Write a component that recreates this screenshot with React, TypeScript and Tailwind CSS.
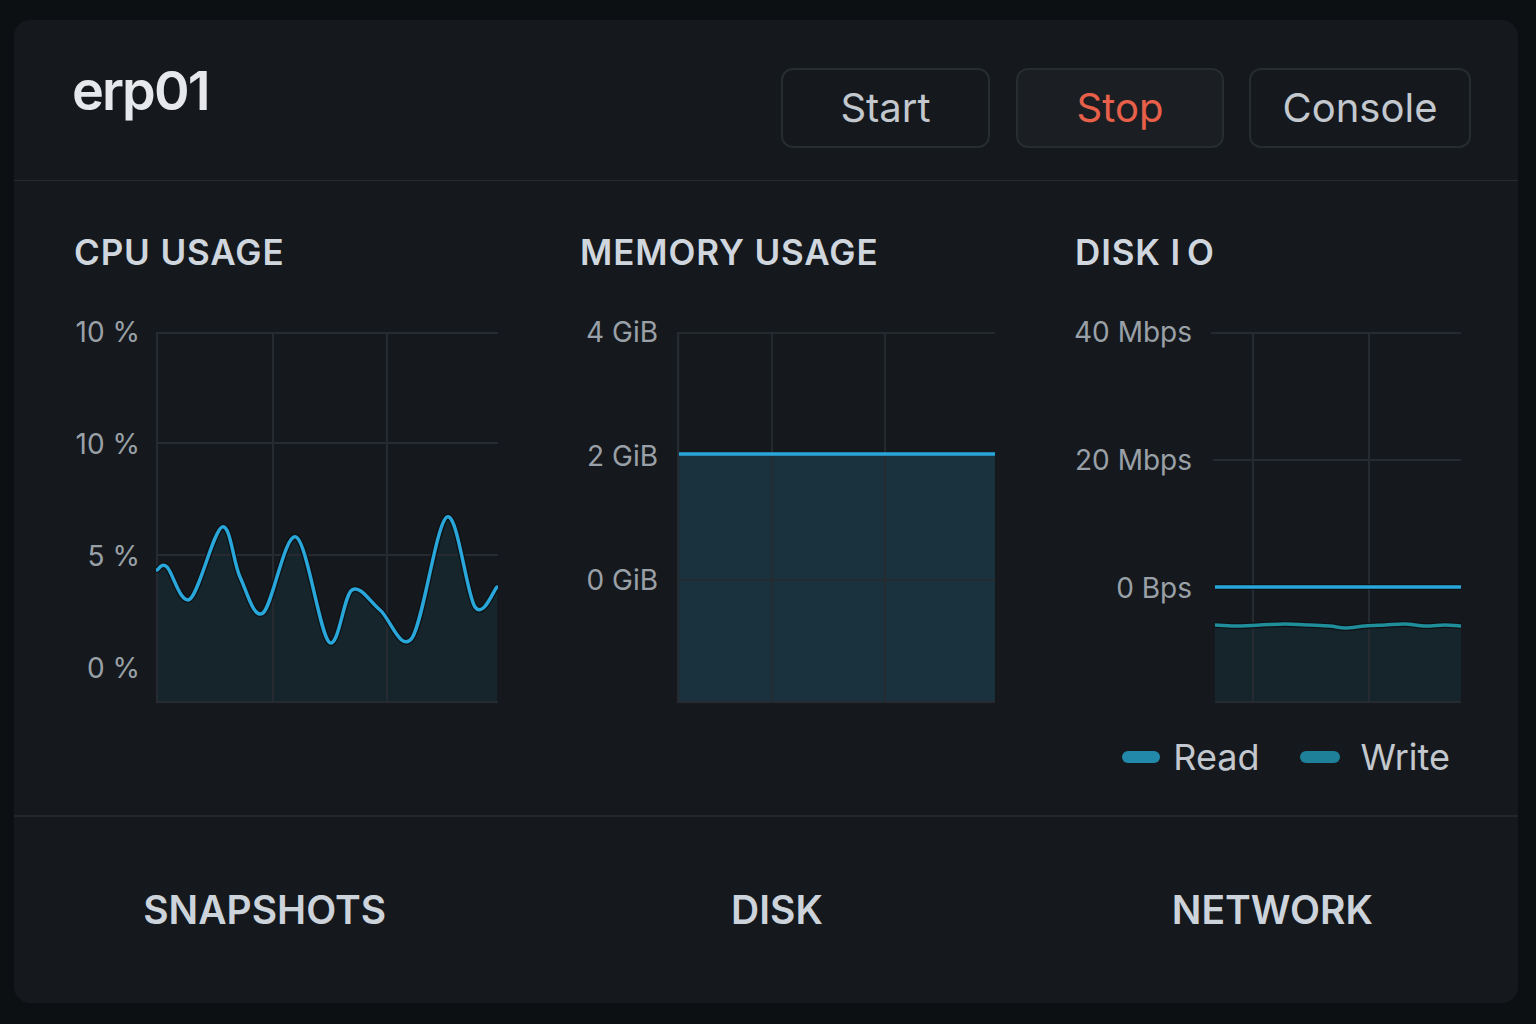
import React from "react";

type Pt = [number, number];

function smoothPath(points: Pt[]) {
  let d = `M ${points[0][0]} ${points[0][1]}`;
  for (let i = 0; i < points.length - 1; i++) {
    const p0 = points[i - 1] ?? points[i];
    const p1 = points[i];
    const p2 = points[i + 1];
    const p3 = points[i + 2] ?? p2;
    const c1x = p1[0] + (p2[0] - p0[0]) / 6;
    const c1y = p1[1] + (p2[1] - p0[1]) / 6;
    const c2x = p2[0] - (p3[0] - p1[0]) / 6;
    const c2y = p2[1] - (p3[1] - p1[1]) / 6;
    d += ` C ${c1x} ${c1y}, ${c2x} ${c2y}, ${p2[0]} ${p2[1]}`;
  }
  return d;
}

const GRID = "#262b31";
const LINE = "#2aa7da";
const H = 371;

const cpuPoints: Pt[] = [
  [1, 238], [11, 235], [34, 267], [66, 195], [84, 245], [107, 281], [140, 205],
  [173, 310], [196, 258], [224, 278], [256, 306], [291, 185], [319, 275], [341, 255],
];

const writePoints: Pt[] = [
  [0, 293], [20, 294], [45, 293], [70, 292], [95, 293], [115, 294], [130, 296],
  [150, 294], [170, 293], [190, 292], [210, 294], [230, 293], [246, 294],
];

function CpuChart() {
  const line = smoothPath(cpuPoints);
  const W = 342;
  return (
    <svg width={W} height={H} className="block">
      <path d={`${line} L ${W - 1} ${H} L 1 ${H} Z`} fill={LINE} fillOpacity={0.08} />
      {[1, 111, 223].map((y) => (
        <line key={y} x1={0} x2={W} y1={y} y2={y} stroke={GRID} strokeWidth={2} />
      ))}
      {[117, 231].map((x) => (
        <line key={x} x1={x} x2={x} y1={0} y2={H} stroke={GRID} strokeWidth={2} />
      ))}
      <line x1={1} x2={1} y1={0} y2={H} stroke={GRID} strokeWidth={2} />
      <line x1={0} x2={W} y1={H - 1} y2={H - 1} stroke={GRID} strokeWidth={2} />
      <path d={line} fill="none" stroke="#0d1114" strokeWidth={6} strokeLinecap="round" />
      <path d={line} fill="none" stroke={LINE} strokeWidth={3.5} strokeLinecap="round" />
    </svg>
  );
}

function MemoryChart() {
  const W = 318;
  return (
    <svg width={W} height={H} className="block">
      <rect x={1} y={122} width={W - 1} height={H - 122} fill={LINE} fillOpacity={0.18} />
      {[1, 248].map((y) => (
        <line key={y} x1={0} x2={W} y1={y} y2={y} stroke={GRID} strokeWidth={2} strokeOpacity={0.9} />
      ))}
      {[95, 208].map((x) => (
        <line key={x} x1={x} x2={x} y1={0} y2={H} stroke={GRID} strokeWidth={2} strokeOpacity={0.9} />
      ))}
      <line x1={1} x2={1} y1={0} y2={H} stroke={GRID} strokeWidth={2.5} />
      <line x1={0} x2={W} y1={H - 1} y2={H - 1} stroke={GRID} strokeWidth={2} />
      <line x1={2} x2={W} y1={122} y2={122} stroke={LINE} strokeWidth={3.5} />
    </svg>
  );
}

function DiskChart() {
  const W = 246;
  const write = smoothPath(writePoints);
  return (
    <svg width={W + 4} height={H} className="-ml-[4px] block">
      <g transform="translate(4 0)">
        <path d={`${write} L ${W} ${H} L 0 ${H} Z`} fill={LINE} fillOpacity={0.08} />
        <line x1={-4} x2={W} y1={1} y2={1} stroke={GRID} strokeWidth={2} />
        <line x1={-2} x2={W} y1={128} y2={128} stroke={GRID} strokeWidth={2} />
        {[38, 154].map((x) => (
          <line key={x} x1={x} x2={x} y1={1} y2={H} stroke={GRID} strokeWidth={2} />
        ))}
        <line x1={0} x2={W} y1={H - 1} y2={H - 1} stroke={GRID} strokeWidth={2} />
        <line x1={0} x2={W} y1={255} y2={255} stroke="#0d1114" strokeWidth={5.5} />
        <line x1={0} x2={W} y1={255} y2={255} stroke={LINE} strokeWidth={3.5} />
        <path d={write} fill="none" stroke="#0d1114" strokeWidth={6} />
        <path d={write} fill="none" stroke="#1f8d9a" strokeWidth={3.5} />
      </g>
    </svg>
  );
}

function AxisLabels({ labels, width, gap }: { labels: string[]; width: string; gap: string }) {
  return (
    <div className={`flex shrink-0 flex-col items-end ${width} ${gap}`}>
      {labels.map((l, i) => (
        <span key={i} className="h-[28px] whitespace-nowrap text-[28px] leading-[28px] text-[#9aa0a7]">
          {l}
        </span>
      ))}
    </div>
  );
}

function SectionTitle({ children }: { children: React.ReactNode }) {
  return (
    <h2 className="text-[35px] font-semibold leading-[35px] tracking-[0.025em] text-[#d0d6de]">{children}</h2>
  );
}

export default function App() {
  return (
    <div
      className="min-h-screen bg-[#0d1013] pt-[20px] pl-[14px]"
      style={{ fontFamily: "Inter, 'Noto Sans', sans-serif" }}
    >
      <div className="w-[1504px] overflow-hidden rounded-[16px] bg-[#15191d]">
        <header className="flex h-[161px] items-start justify-between border-b border-[#262b30] pt-[44px] pr-[47px] pl-[58px]">
          <h1 className="text-[54px] font-semibold leading-[54px] tracking-[-0.035em] text-[#e6e8eb]">erp01</h1>
          <div className="mt-[4px] flex gap-[26px]">
            <button className="h-[80px] w-[209px] rounded-[12px] border-2 border-[#272c31] bg-[#15191d] text-[40px] text-[#c3c8ce]">
              Start
            </button>
            <button className="h-[80px] w-[208px] rounded-[12px] border-2 border-[#272c31] bg-[#1b1f23] text-[40px] text-[#e9604a]">
              Stop
            </button>
            <button className="ml-[-1px] h-[80px] w-[222px] rounded-[12px] border-2 border-[#272c31] bg-[#15191d] text-[40px] text-[#c3c8ce]">
              Console
            </button>
          </div>
        </header>

        <section className="grid grid-cols-[506px_495px_1fr] border-b-2 border-[#22272c] pt-[54px] pb-[40px] pl-[60px]">
          <div className="flex flex-col">
            <SectionTitle>CPU USAGE</SectionTitle>
            <div className="mt-[48px] flex items-start gap-[16px]">
              <AxisLabels labels={["10 %", "10 %", "5 %", "0 %"]} width="w-[66px]" gap="gap-[84px]" />
              <div className="mt-[14px]">
                <CpuChart />
              </div>
            </div>
          </div>

          <div className="flex flex-col">
            <SectionTitle>MEMORY USAGE</SectionTitle>
            <div className="mt-[48px] flex items-start gap-[19px]">
              <AxisLabels labels={["4 GiB", "2 GiB", "0 GiB"]} width="w-[78px]" gap="gap-[96px]" />
              <div className="mt-[14px]">
                <MemoryChart />
              </div>
            </div>
          </div>

          <div className="flex flex-col">
            <SectionTitle>
              DISK I<span className="ml-[6px]">O</span>
            </SectionTitle>
            <div className="mt-[48px] flex items-start gap-[23px]">
              <AxisLabels labels={["40 Mbps", "20 Mbps", "0 Bps"]} width="w-[117px]" gap="gap-[100px]" />
              <div className="mt-[14px]">
                <DiskChart />
              </div>
            </div>
            <div className="mt-[36px] flex w-[386px] items-center justify-end pr-[11px] text-[36px] leading-[36px] text-[#c3c8ce]">
              <span className="h-[12px] w-[38px] rounded-full bg-[#2389ab]" />
              <span className="ml-[13px]">Read</span>
              <span className="ml-[41px] h-[12px] w-[40px] rounded-full bg-[#1f8199]" />
              <span className="ml-[20px]">Write</span>
            </div>
          </div>
        </section>

        <footer className="grid h-[186px] grid-cols-3 items-center text-center text-[39px] font-semibold text-[#cdd3db]">
          <span>SNAPSHOTS</span>
          <span className="pl-[22px]">DISK</span>
          <span className="pl-[10px]">NETWORK</span>
        </footer>
      </div>
    </div>
  );
}
